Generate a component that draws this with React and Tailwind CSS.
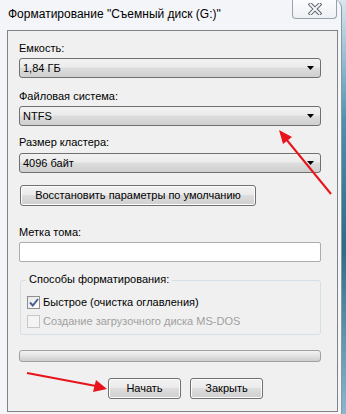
import React from "react";

const font = { fontFamily: '"Liberation Sans", Arial, sans-serif' };

function Combo({ value }) {
  return (
    <div className="ml-[11px] w-[302px] h-[20px] rounded-[3px] border border-[#707070] bg-[linear-gradient(#f2f2f2,#ebebeb_45%,#dddddd_50%,#cfcfcf)] flex items-center pl-[3px] pr-[6px] text-[11px] text-black">
      <span className="flex-1 leading-none">{value}</span>
      <svg width="7" height="4" viewBox="0 0 7 4"><path d="M0 0h7L3.5 4z" fill="#000" /></svg>
    </div>
  );
}

function Label({ children, className = "" }) {
  return <div className={"ml-[11px] h-[15px] text-[11px] leading-[15px] text-black whitespace-nowrap " + className}>{children}</div>;
}

function Btn({ children, className = "" }) {
  return (
    <div className={"h-[21px] rounded-[3px] border border-[#707070] bg-[linear-gradient(#f2f2f2,#ebebeb_45%,#dddddd_50%,#cfcfcf)] flex items-center justify-center text-[11px] text-black whitespace-nowrap shadow-[inset_0_0_0_1px_#fcfcfc] " + className}>
      {children}
    </div>
  );
}

export default function App() {
  return (
    <div className="relative w-[346px] h-[414px] overflow-hidden bg-[linear-gradient(#d9e6ee,#4c8fae_30%,#2f6c88_60%,#8db6cb)]" style={font}>
      <div className="w-[342px] h-[414px] bg-[#f3f5f8] rounded-tr-[8px] border-r border-[#8a98a6] flex flex-col relative">
        <div className="h-[30px] flex items-start">
          <div className="pl-[8px] pt-[6px] text-[12px] leading-[16px] text-black whitespace-nowrap">Форматирование "Съемный диск (G:)"</div>
          <div className="ml-auto mr-[4px] w-[45px] h-[19px] rounded-b-[4px] border border-t-0 border-[#9aa3ad] bg-[linear-gradient(#fbfcfd,#eef1f4)] flex items-center justify-center">
            <svg width="14" height="12" viewBox="0 0 14 12">
              <path d="M2.5 1.5 L11.5 10.5 M11.5 1.5 L2.5 10.5" stroke="#5e6570" strokeWidth="4" strokeLinecap="square" />
              <path d="M2.5 1.5 L11.5 10.5 M11.5 1.5 L2.5 10.5" stroke="#f4f5f6" strokeWidth="2" strokeLinecap="square" />
            </svg>
          </div>
        </div>
        <div className="ml-[7px] w-[331px] h-[382px] border border-[#838383] bg-[#f0f0f0] flex flex-col">
          <Label className="mt-[10px]">Емкость:</Label>
          <div className="mt-[2px]"><Combo value="1,84 ГБ" /></div>
          <Label className="mt-[11px]">Файловая система:</Label>
          <div className="mt-[2px]"><Combo value="NTFS" /></div>
          <Label className="mt-[9px]">Размер кластера:</Label>
          <div className="mt-[3px]"><Combo value="4096 байт" /></div>
          <Btn className="mt-[12px] ml-[12px] w-[236px]">Восстановить параметры по умолчанию</Btn>
          <Label className="mt-[19px]">Метка тома:</Label>
          <div className="mt-[2px] ml-[11px] w-[302px] h-[20px] border border-[#abadb3] bg-white rounded-[2px]" />
          <div className="relative mt-[18px] ml-[12px] w-[301px] h-[55px] border border-[#d5dfe5] rounded-[3px]">
            <div className="absolute left-[5px] top-[-9px] px-[3px] bg-[#f0f0f0] text-[11px] leading-[15px] text-black whitespace-nowrap">Способы форматирования:</div>
            <div className="flex flex-col pt-[12px] pl-[6px]">
              <div className="flex items-center h-[19px]">
                <div className="w-[13px] h-[13px] border border-[#8e8f8f] bg-[linear-gradient(135deg,#e6e6e6,#ffffff)] flex items-center justify-center">
                  <svg width="10" height="9" viewBox="0 0 10 9"><path d="M1 4.5 L3.8 7.5 L9 1" stroke="#4a5f97" strokeWidth="2" fill="none" /></svg>
                </div>
                <span className="ml-[3px] text-[11px] text-black whitespace-nowrap">Быстрое (очистка оглавления)</span>
              </div>
              <div className="flex items-center h-[19px]">
                <div className="w-[13px] h-[13px] border border-[#c8c8c8] bg-[#f4f4f4]" />
                <span className="ml-[3px] text-[11px] text-[#a0a0a0] whitespace-nowrap">Создание загрузочного диска MS-DOS</span>
              </div>
            </div>
          </div>
          <div className="mt-[15px] ml-[11px] w-[302px] h-[12px] rounded-[3px] border border-[#a0a0a0] bg-[linear-gradient(#f3f3f3,#e2e2e2_50%,#cdcdcd)]" />
          <div className="mt-[16px] ml-[100px] flex gap-[9px]">
            <Btn className="w-[73px]">Начать</Btn>
            <Btn className="w-[73px]">Закрыть</Btn>
          </div>
        </div>
      </div>
      <svg className="absolute left-0 top-0 pointer-events-none" width="346" height="414" viewBox="0 0 346 414">
        <line x1="331" y1="194" x2="286" y2="139" stroke="#e8141b" strokeWidth="2" />
        <path d="M279 130 L292 137 L283 144 Z" fill="#e8141b" />
        <line x1="27" y1="373" x2="96" y2="386" stroke="#e8141b" strokeWidth="2" />
        <path d="M107 389 L93 392 L96 380 Z" fill="#e8141b" />
      </svg>
    </div>
  );
}
